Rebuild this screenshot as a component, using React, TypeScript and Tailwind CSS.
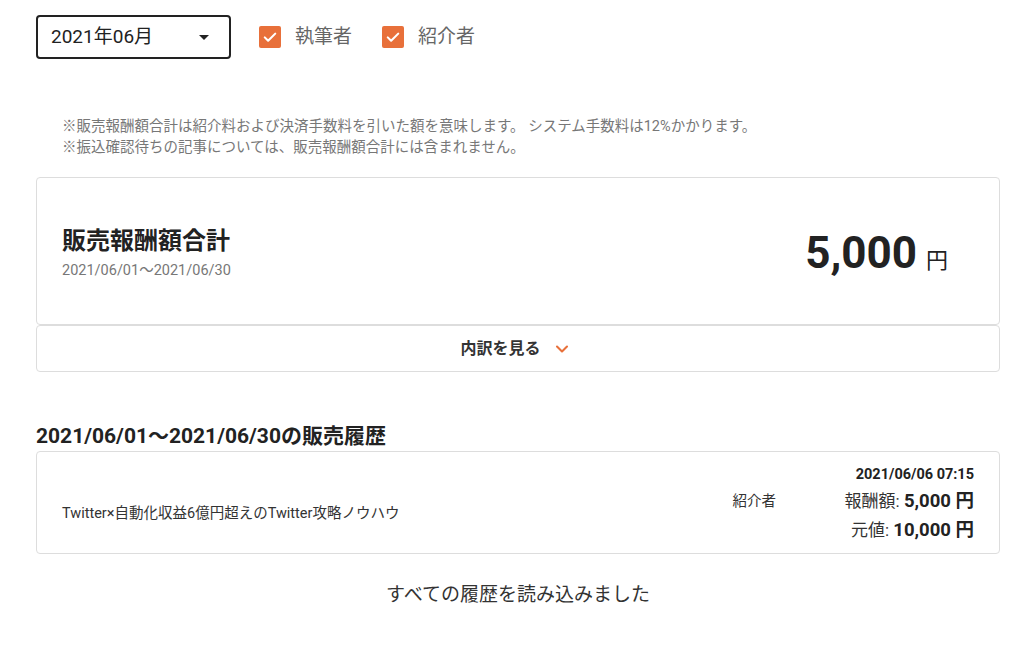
import { ChevronDown } from 'lucide-react'

const font = { fontFamily: 'Roboto, "Noto Sans CJK JP", sans-serif' }

function CheckBox({ label }: { label: string }) {
  return (
    <label className="flex items-center gap-[14px]">
      <span className="flex size-[22px] items-center justify-center rounded-[2px] bg-[#e8703a]">
        <svg viewBox="0 0 24 24" className="size-[18px]" fill="none" stroke="#fff" strokeWidth="2.8" strokeLinecap="round" strokeLinejoin="round">
          <path d="M5 12.5l4.5 4.5L19 7.5" />
        </svg>
      </span>
      <span className="text-[19px] text-[#666]">{label}</span>
    </label>
  )
}

export default function App() {
  return (
    <div className="min-h-[646px] bg-white pl-9 pr-6 pt-[15px] text-[#222]" style={font}>
      <div className="flex items-center">
        <button
          type="button"
          className="flex h-[44px] w-[195px] items-center justify-between rounded-[4px] border-2 border-[#222] pl-[13px] pr-[20px] text-[19px] text-[#222]"
        >
          <span>2021年06月</span>
          <svg viewBox="0 0 10 5" className="h-[5px] w-[10px]">
            <path d="M0 0h10L5 5z" fill="#222" />
          </svg>
        </button>
        <div className="ml-[28px] flex items-center gap-[30px]">
          <CheckBox label="執筆者" />
          <CheckBox label="紹介者" />
        </div>
      </div>

      <div className="mt-[57px] pl-[26px] text-[14.5px] leading-[21px] text-[#777]">
        <p>※販売報酬額合計は紹介料および決済手数料を引いた額を意味します。 システム手数料は12%かかります。</p>
        <p>※振込確認待ちの記事については、販売報酬額合計には含まれません。</p>
      </div>

      <div className="mt-[19px] flex h-[148px] items-center justify-between rounded-[4px] border border-[#ddd] pl-[25px] pr-[51px]">
        <div className="pt-[6px]">
          <h2 className="text-[24px] font-bold leading-[30px] text-[#222]">販売報酬額合計</h2>
          <p className="mt-[4px] text-[14.5px] text-[#777]">2021/06/01〜2021/06/30</p>
        </div>
        <div className="flex items-baseline gap-[9px] pt-[6px]">
          <span className="text-[44px] font-bold leading-none text-[#222]">5,000</span>
          <span className="text-[22px] text-[#222]">円</span>
        </div>
      </div>

      <button
        type="button"
        className="flex h-[47px] w-full items-center justify-center gap-[11px] rounded-[4px] border border-[#ddd] pr-[4px] text-[16px] font-bold text-[#333]"
      >
        <span>内訳を見る</span>
        <ChevronDown className="size-[20px] text-[#e8703a]" strokeWidth={2.5} />
      </button>

      <h3 className="mt-[51px] text-[21px] font-bold leading-[26px] text-[#222]">2021/06/01〜2021/06/30の販売履歴</h3>

      <div className="mt-[2px] flex h-[103px] items-center rounded-[4px] border border-[#ddd] pl-[25px] pr-[25px]">
        <p className="flex-1 pt-[23px] text-[14.5px] text-[#333]">Twitter×自動化収益6億円超えのTwitter攻略ノウハウ</p>
        <p className="w-[112px] pb-[2px] text-[14.5px] text-[#333]">紹介者</p>
        <div className="flex flex-col items-end pt-[2px]">
          <span className="text-[14.5px] font-bold leading-[20px] text-[#222]">2021/06/06 07:15</span>
          <span className="mt-[3px] text-[17px] leading-[26px] text-[#333]">
            報酬額: <b className="text-[18.5px] text-[#222]">5,000 円</b>
          </span>
          <span className="mt-[3px] text-[17px] leading-[26px] text-[#333]">
            元値: <b className="text-[18.5px] text-[#222]">10,000 円</b>
          </span>
        </div>
      </div>

      <p className="mt-[27px] text-center text-[19px] text-[#333]">すべての履歴を読み込みました</p>
    </div>
  )
}
